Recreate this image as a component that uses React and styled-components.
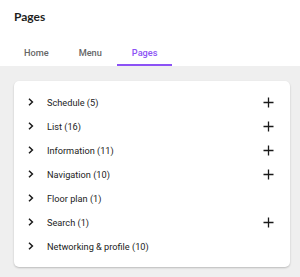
import React, { useState } from 'react';
import styled, { createGlobalStyle } from 'styled-components';

const GlobalStyle = createGlobalStyle`
  html, body {
    margin: 0;
    padding: 0;
    background: #ffffff;
  }
  body {
    font-family: Roboto, "Liberation Sans", sans-serif;
  }
`;

const tabs = ['Home', 'Menu', 'Pages'];

const sections = [
  { name: 'Schedule', count: 5, addable: true },
  { name: 'List', count: 16, addable: true },
  { name: 'Information', count: 11, addable: true },
  { name: 'Navigation', count: 10, addable: true },
  { name: 'Floor plan', count: 1, addable: false },
  { name: 'Search', count: 1, addable: true },
  { name: 'Networking & profile', count: 10, addable: false },
];

const ChevronIcon = () => (
  <svg width="6" height="8" viewBox="0 0 6 8">
    <path d="M1 0.8 L4.4 4 L1 7.2" fill="none" stroke="#1a1a1a" strokeWidth="1.5" />
  </svg>
);

const PlusIcon = () => (
  <svg width="11" height="11" viewBox="0 0 11 11">
    <path d="M5.5 0.5 V10.5 M0.5 5.5 H10.5" fill="none" stroke="#1a1a1a" strokeWidth="1.3" />
  </svg>
);

const App = () => {
  const [active, setActive] = useState('Pages');

  return (
    <>
      <GlobalStyle />
      <Page>
        <Header>
          <Title>Pages</Title>
          <TabBar>
            {tabs.map(tab => (
              <Tab key={tab} $active={tab === active} onClick={() => setActive(tab)}>
                {tab}
              </Tab>
            ))}
          </TabBar>
        </Header>
        <Content>
          <Card>
            {sections.map(section => (
              <Row key={section.name}>
                <Chevron>
                  <ChevronIcon />
                </Chevron>
                <Label>{section.name} ({section.count})</Label>
                {section.addable && (
                  <AddButton>
                    <PlusIcon />
                  </AddButton>
                )}
              </Row>
            ))}
          </Card>
        </Content>
      </Page>
    </>
  );
};

const Page = styled.div`
  width: 300px;
  height: 277px;
  display: flex;
  flex-direction: column;
  background: #efefef;
`;

const Header = styled.div`
  background: #ffffff;
  display: flex;
  flex-direction: column;
`;

const Title = styled.h1`
  margin: 0;
  padding: 9px 14px 0;
  font-family: Lato, "Liberation Sans", sans-serif;
  font-size: 12px;
  font-weight: 700;
  color: #1e1e1e;
  line-height: 16px;
`;

const TabBar = styled.div`
  display: flex;
  padding: 0 9px;
  margin-top: 13px;
`;

const Tab = styled.div`
  padding: 2px 15px 0;
  height: 28px;
  box-sizing: border-box;
  display: flex;
  align-items: center;
  font-size: 9.2px;
  font-weight: 500;
  color: ${p => (p.$active ? '#8c52f5' : '#666666')};
  border-bottom: 2px solid ${p => (p.$active ? '#8c52f5' : 'transparent')};
  cursor: pointer;
`;

const Content = styled.div`
  flex: 1;
  padding: 15px 10px 10px 14px;
  box-sizing: border-box;
`;

const Card = styled.div`
  background: #ffffff;
  border-radius: 5px;
  box-shadow: 0 1px 2px rgba(0, 0, 0, 0.22);
  padding: 9px 0;
  display: flex;
  flex-direction: column;
`;

const Row = styled.div`
  height: 24px;
  display: flex;
  align-items: center;
  padding: 0 16px 0 14px;
`;

const Chevron = styled.span`
  width: 6px;
  height: 8px;
  display: flex;
  margin-right: 13px;
`;

const Label = styled.span`
  flex: 1;
  font-size: 9.2px;
  color: #1c1c1c;
`;

const AddButton = styled.span`
  display: flex;
  width: 11px;
  height: 11px;
`;

export default App;
